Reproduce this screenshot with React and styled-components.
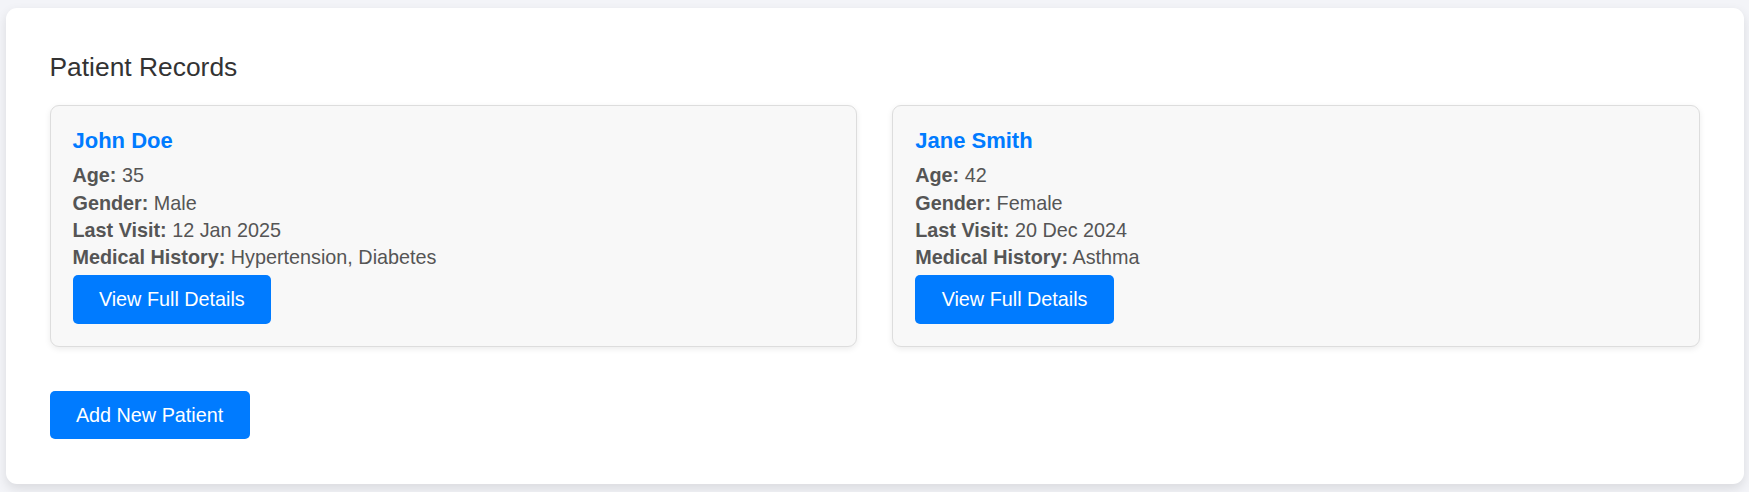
import React from "react";
import styled, { createGlobalStyle } from "styled-components";

const GlobalStyle = createGlobalStyle`
    body {
        margin: 0;
        background: #f3f4f8;
        font-family: "Liberation Sans", Arial, sans-serif;
    }
`;

const Page = styled.div`
    padding: 7.5px 5px 8px 5.5px;
`;

const Panel = styled.div`
    background: white;
    border-radius: 11px;
    padding: 44px 44px 45px;
    box-shadow: 0px 4.4px 11px rgba(0, 0, 0, 0.1);
`;

const Title = styled.h2`
    margin: 0 0 23px;
    font-size: 26.4px;
    font-weight: normal;
    color: #333;
    line-height: 30.4px;
`;

const CardGrid = styled.div`
    display: grid;
    grid-template-columns: 1fr 1fr;
    gap: 35px;
    margin-bottom: 44px;
`;

const Card = styled.div`
    background: #f8f8f8;
    border: 1px solid #ddd;
    border-radius: 9px;
    padding: 22px;
    box-shadow: 0px 2px 6px rgba(0, 0, 0, 0.08);
`;

const Name = styled.h3`
    margin: 0 0 9px;
    font-size: 22px;
    line-height: 25.3px;
    font-weight: bold;
    color: #007bff;
`;

const Row = styled.p`
    margin: 0;
    font-size: 19.8px;
    line-height: 27.4px;
    color: #555;

    strong {
        font-weight: bold;
    }
`;

const Button = styled.button`
    display: inline-block;
    margin-top: ${(p) => p.$top || "0"};
    background: #007bff;
    color: white;
    border: none;
    padding: 13px 26.4px;
    border-radius: 5px;
    cursor: pointer;
    font-family: "Liberation Sans", Arial, sans-serif;
    font-size: 19.8px;
    line-height: 22.8px;

    &:hover {
        background: #0069d9;
    }
`;

const patients = [
    { name: "John Doe", age: 35, gender: "Male", visit: "12 Jan 2025", history: "Hypertension, Diabetes" },
    { name: "Jane Smith", age: 42, gender: "Female", visit: "20 Dec 2024", history: "Asthma" },
];

const App = () => {
    return (
        <>
            <GlobalStyle />
            <Page>
                <Panel>
                    <Title>Patient Records</Title>
                    <CardGrid>
                        {patients.map((p) => (
                            <Card key={p.name}>
                                <Name>{p.name}</Name>
                                <Row><strong>Age:</strong> {p.age}</Row>
                                <Row><strong>Gender:</strong> {p.gender}</Row>
                                <Row><strong>Last Visit:</strong> {p.visit}</Row>
                                <Row><strong>Medical History:</strong> {p.history}</Row>
                                <Button $top="3px">View Full Details</Button>
                            </Card>
                        ))}
                    </CardGrid>
                    <Button>Add New Patient</Button>
                </Panel>
            </Page>
        </>
    );
};

export default App;
